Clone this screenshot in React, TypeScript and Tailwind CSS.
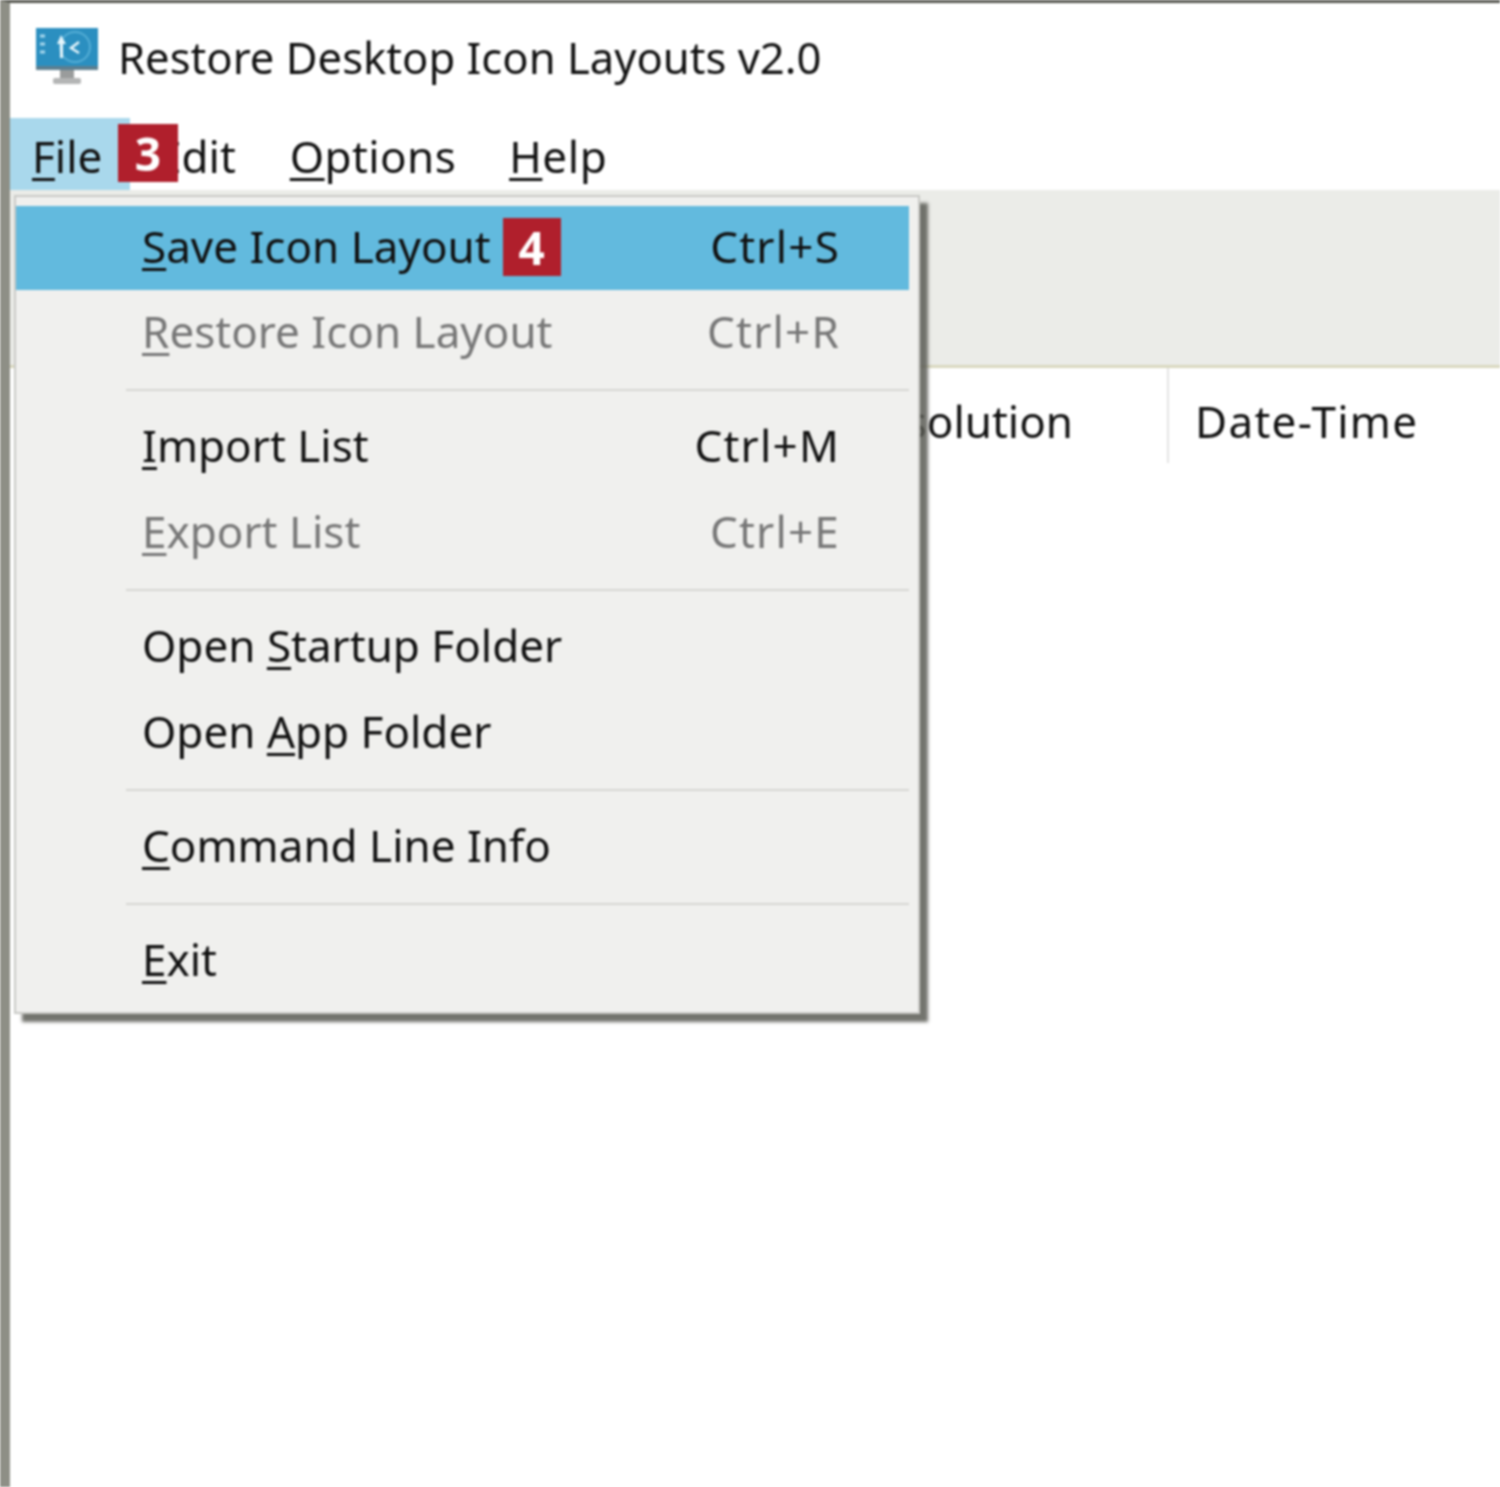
const font = { fontFamily: '"Noto Sans", sans-serif' };

function Key({ children }: { children: string }) {
  return <span className="underline decoration-[3px] underline-offset-[5px]">{children}</span>;
}

function Badge({ n, wide }: { n: string; wide?: boolean }) {
  return (
    <span
      className={`flex h-[58px] shrink-0 items-center justify-center bg-[#b01f2c] text-[46px] font-bold leading-none text-white ${
        wide ? 'w-[60px]' : 'w-[58px]'
      }`}
    >
      {n}
    </span>
  );
}

function AppIcon() {
  return (
    <svg viewBox="0 0 64 58" className="h-[58px] w-[64px] shrink-0">
      <rect x="1" y="0" width="62" height="40" fill="#2b8fc0" />
      <rect x="1" y="38" width="62" height="4" fill="#5d7f90" />
      <circle cx="40" cy="19" r="15" fill="none" stroke="#55aed6" strokeWidth="2" />
      <path d="M5 8h5M5 16h5M5 24h5" stroke="#a8d8ee" strokeWidth="3" />
      <path d="M26 7l-4 9h3v14h3V16h3z" fill="#e6f5fb" />
      <path d="M44 14l-8 6 8 5" fill="none" stroke="#e6f5fb" strokeWidth="2.5" />
      <rect x="25" y="42" width="14" height="8" fill="#9a9c9c" />
      <rect x="18" y="50" width="28" height="6" rx="2" fill="#b4b5b5" />
    </svg>
  );
}

function Row({ label, shortcut, disabled, active, badge }: {
  label: React.ReactNode;
  shortcut?: string;
  disabled?: boolean;
  active?: boolean;
  badge?: string;
}) {
  return (
    <div
      className={`flex items-center pb-[4px] pl-[126px] pr-[69px] ${
        active ? 'h-[84px] bg-[#62bade]' : 'h-[86px]'
      } ${disabled ? 'text-[#777777]' : 'text-[#111111]'}`}
    >
      <span>{label}</span>
      {badge && <span className="ml-[12px] pt-[2px]"><Badge n={badge} /></span>}
      {shortcut && <span className="ml-auto tracking-[1.2px]">{shortcut}</span>}
    </div>
  );
}

function Sep() {
  return <div className="my-[13px] ml-[110px] h-[2px] bg-[#d6d6d3]" />;
}

export default function App() {
  return (
    <div
      style={font}
      className="relative flex h-[1487px] w-[1500px] flex-col overflow-hidden border-t-[3px] border-l-[10px] border-t-[#55564f] border-l-[#8e8f86] bg-white text-[44px] leading-none text-[#111111] [filter:blur(0.9px)]"
    >
      <div className="flex h-[115px] items-center gap-[19px] pb-[8px] pl-[25px]">
        <AppIcon />
        <span className="pt-[2px] text-[43.6px]">Restore Desktop Icon Layouts v2.0</span>
      </div>

      <div className="flex h-[72px] items-center">
        <div className="flex h-full w-[120px] items-center bg-[#a9d8ec] pt-[4px] pl-[22px]">
          <span><Key>F</Key>ile</span>
        </div>
        <span className="ml-[27px] pt-[4px]">Edit</span>
        <span className="ml-[54px] pt-[4px] tracking-[0.4px]"><Key>O</Key>ptions</span>
        <span className="ml-[53px] pt-[4px] tracking-[0.6px]"><Key>H</Key>elp</span>
      </div>

      <div className="h-[178px] border-b-[3px] border-b-[#d9d8bf] bg-[#ebece8]" />

      <div className="flex h-[95px] items-center">
        <div className="flex h-full w-[1159px] items-center justify-end border-r-2 border-r-[#e4e4e4] pt-[10px] pr-[94px]">
          <span>Resolution</span>
        </div>
        <span className="pt-[10px] pl-[26px] tracking-[1.3px]">Date-Time</span>
      </div>

      <div className="absolute top-[121px] left-[108px] z-20">
        <Badge n="3" wide />
      </div>

      <div className="absolute top-[192px] left-[4px] z-10 w-[906px] border-2 border-[#c9cac6] bg-[#f0f0ee] pt-[9px] pr-[9px] pb-[8px] shadow-[8px_8px_3px_rgba(90,92,85,0.85)]">
        <Row active label={<><Key>S</Key>ave Icon Layout</>} shortcut="Ctrl+S" badge="4" />
        <Row disabled label={<><Key>R</Key>estore Icon Layout</>} shortcut="Ctrl+R" />
        <Sep />
        <Row label={<><Key>I</Key>mport List</>} shortcut="Ctrl+M" />
        <Row disabled label={<><Key>E</Key>xport List</>} shortcut="Ctrl+E" />
        <Sep />
        <Row label={<>Open <Key>S</Key>tartup Folder</>} />
        <Row label={<>Open <Key>A</Key>pp Folder</>} />
        <Sep />
        <Row label={<><Key>C</Key>ommand Line Info</>} />
        <Sep />
        <Row label={<><Key>E</Key>xit</>} />
      </div>
    </div>
  );
}
